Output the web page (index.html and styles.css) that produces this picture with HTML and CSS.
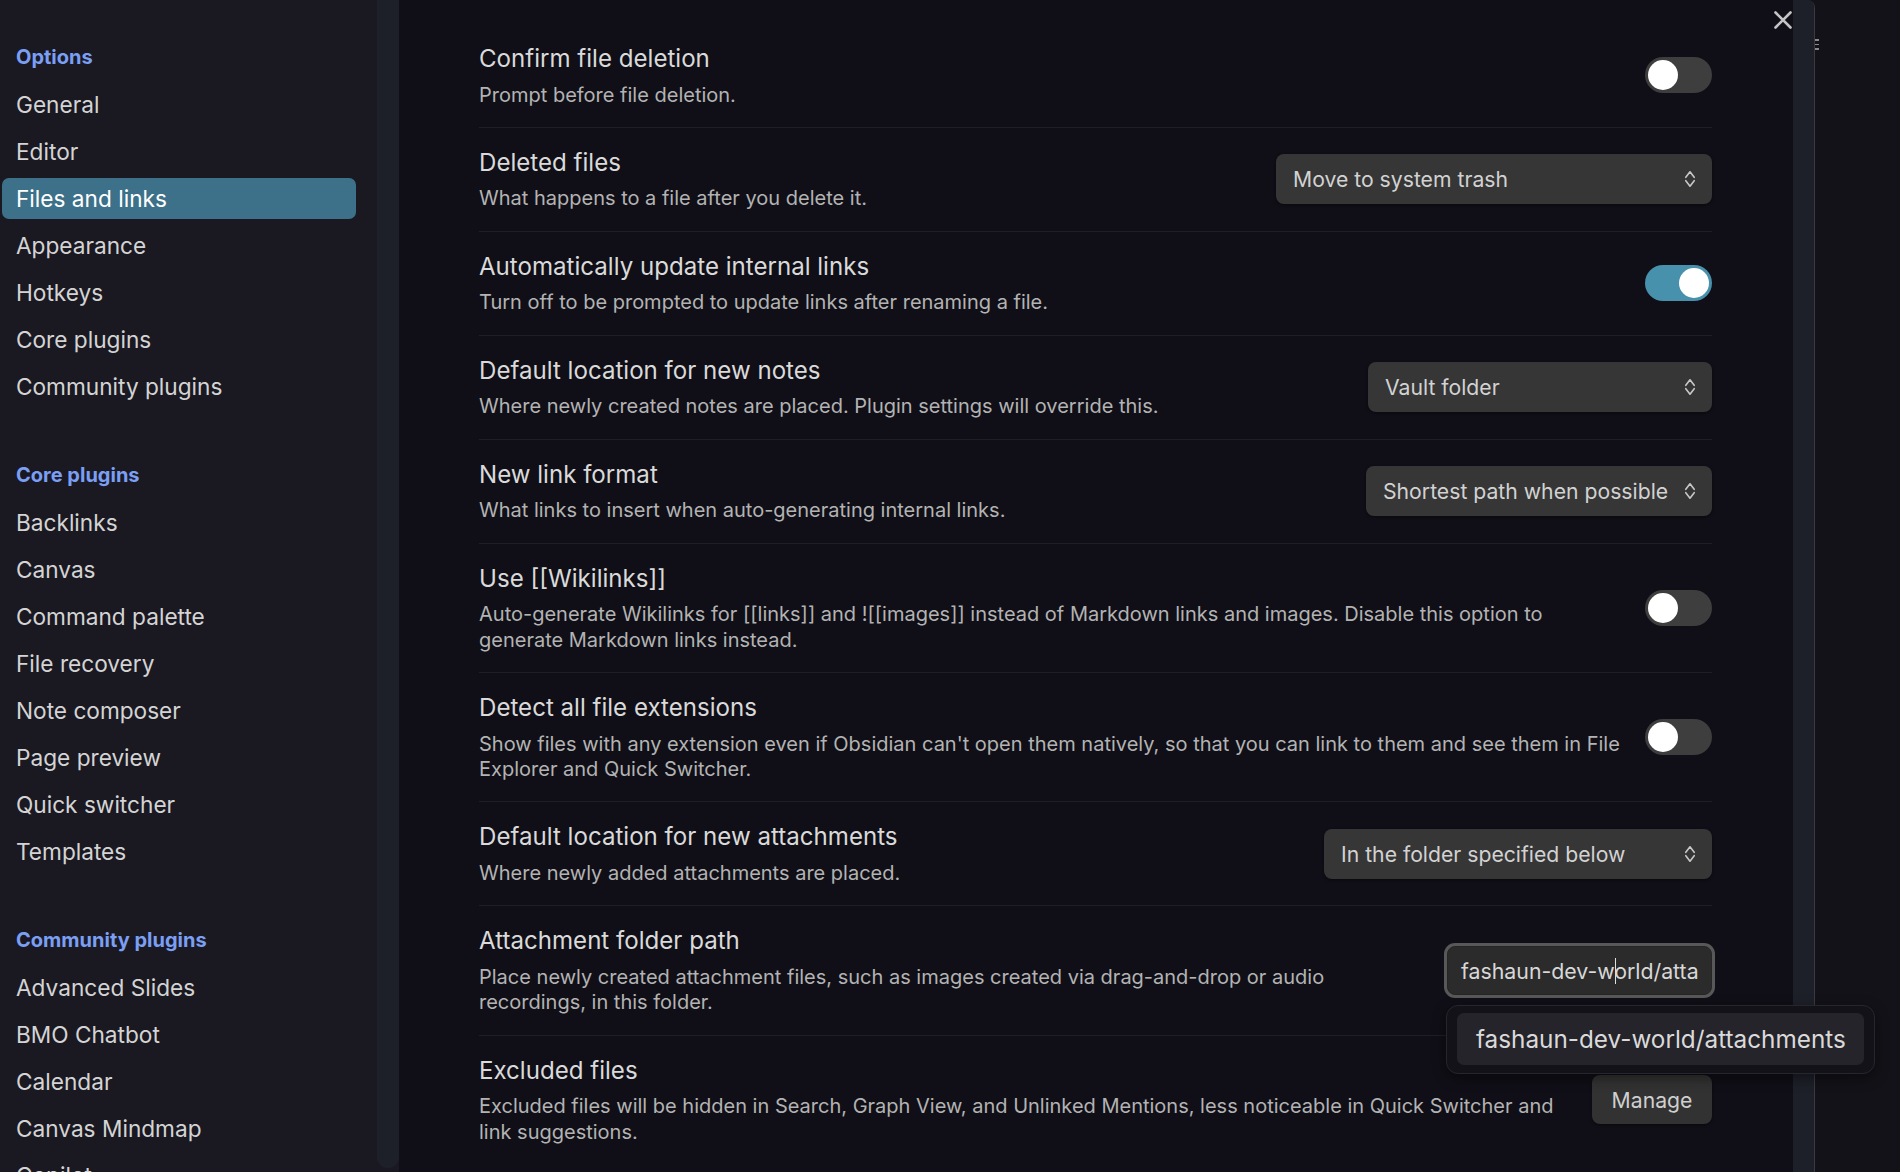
FILE: index.html
```html
<!DOCTYPE html>
<html lang="en">
<head>
<meta charset="utf-8">
<title>Settings – Files and links</title>
<link rel="stylesheet" href="styles.css">
</head>
<body>
<div class="window">
  <div class="modal">
    <aside class="sidebar">
      <nav class="nav">
        <div class="nav-group">
          <div class="nav-heading">Options</div>
          <div class="nav-item">General</div>
          <div class="nav-item">Editor</div>
          <div class="nav-item active">Files and links</div>
          <div class="nav-item">Appearance</div>
          <div class="nav-item">Hotkeys</div>
          <div class="nav-item">Core plugins</div>
          <div class="nav-item">Community plugins</div>
        </div>
        <div class="nav-group">
          <div class="nav-heading">Core plugins</div>
          <div class="nav-item">Backlinks</div>
          <div class="nav-item">Canvas</div>
          <div class="nav-item">Command palette</div>
          <div class="nav-item">File recovery</div>
          <div class="nav-item">Note composer</div>
          <div class="nav-item">Page preview</div>
          <div class="nav-item">Quick switcher</div>
          <div class="nav-item">Templates</div>
        </div>
        <div class="nav-group">
          <div class="nav-heading">Community plugins</div>
          <div class="nav-item">Advanced Slides</div>
          <div class="nav-item">BMO Chatbot</div>
          <div class="nav-item">Calendar</div>
          <div class="nav-item">Canvas Mindmap</div>
          <div class="nav-item">Copilot</div>
        </div>
      </nav>
      <div class="sidebar-scroll"></div>
    </aside>

    <main class="content">
      <div class="setting">
        <div class="info">
          <div class="name">Confirm file deletion</div>
          <div class="desc">Prompt before file deletion.</div>
        </div>
        <div class="control"><div class="toggle"><div class="knob"></div></div></div>
      </div>

      <div class="setting">
        <div class="info">
          <div class="name">Deleted files</div>
          <div class="desc">What happens to a file after you delete it.</div>
        </div>
        <div class="control">
          <div class="dropdown w-trash"><span>Move to system trash</span>
            <svg class="chev" viewBox="0 0 12 20" width="12" height="20"><path d="M1.8 8.3 L6 2.8 L10.2 8.3 M1.8 11.7 L6 17.2 L10.2 11.7"/></svg>
          </div>
        </div>
      </div>

      <div class="setting">
        <div class="info">
          <div class="name">Automatically update internal links</div>
          <div class="desc">Turn off to be prompted to update links after renaming a file.</div>
        </div>
        <div class="control"><div class="toggle on"><div class="knob"></div></div></div>
      </div>

      <div class="setting">
        <div class="info">
          <div class="name">Default location for new notes</div>
          <div class="desc">Where newly created notes are placed. Plugin settings will override this.</div>
        </div>
        <div class="control">
          <div class="dropdown w-vault"><span>Vault folder</span>
            <svg class="chev" viewBox="0 0 12 20" width="12" height="20"><path d="M1.8 8.3 L6 2.8 L10.2 8.3 M1.8 11.7 L6 17.2 L10.2 11.7"/></svg>
          </div>
        </div>
      </div>

      <div class="setting">
        <div class="info">
          <div class="name">New link format</div>
          <div class="desc">What links to insert when auto-generating internal links.</div>
        </div>
        <div class="control">
          <div class="dropdown w-short"><span>Shortest path when possible</span>
            <svg class="chev" viewBox="0 0 12 20" width="12" height="20"><path d="M1.8 8.3 L6 2.8 L10.2 8.3 M1.8 11.7 L6 17.2 L10.2 11.7"/></svg>
          </div>
        </div>
      </div>

      <div class="setting">
        <div class="info">
          <div class="name">Use [[Wikilinks]]</div>
          <div class="desc">Auto-generate Wikilinks for [[links]] and ![[images]] instead of Markdown links and images. Disable this option to generate Markdown links instead.</div>
        </div>
        <div class="control"><div class="toggle"><div class="knob"></div></div></div>
      </div>

      <div class="setting">
        <div class="info">
          <div class="name">Detect all file extensions</div>
          <div class="desc">Show files with any extension even if Obsidian can't open them natively, so that you can link to them and see them in File Explorer and Quick Switcher.</div>
        </div>
        <div class="control"><div class="toggle"><div class="knob"></div></div></div>
      </div>

      <div class="setting">
        <div class="info">
          <div class="name">Default location for new attachments</div>
          <div class="desc">Where newly added attachments are placed.</div>
        </div>
        <div class="control">
          <div class="dropdown w-attach"><span>In the folder specified below</span>
            <svg class="chev" viewBox="0 0 12 20" width="12" height="20"><path d="M1.8 8.3 L6 2.8 L10.2 8.3 M1.8 11.7 L6 17.2 L10.2 11.7"/></svg>
          </div>
        </div>
      </div>

      <div class="setting">
        <div class="info">
          <div class="name">Attachment folder path</div>
          <div class="desc">Place newly created attachment files, such as images created via drag-and-drop or audio recordings, in this folder.</div>
        </div>
        <div class="control">
          <div class="path-input">fashaun-dev-w<span class="caret"></span>orld/atta</div>
        </div>
      </div>

      <div class="setting">
        <div class="info">
          <div class="name">Excluded files</div>
          <div class="desc">Excluded files will be hidden in Search, Graph View, and Unlinked Mentions, less noticeable in Quick Switcher and link suggestions.</div>
        </div>
        <div class="control"><div class="btn">Manage</div></div>
      </div>
    </main>

    <div class="content-scroll"></div>

    <div class="close">
      <svg viewBox="0 0 18 18" width="18" height="18"><path d="M1.5 1.5 L16.5 16.5 M16.5 1.5 L1.5 16.5"/></svg>
    </div>
  </div>

  <div class="behind">
    <div class="more-icon"><i></i><i></i><i></i></div>
  </div>

  <div class="suggest">
    <div class="suggest-item">fashaun-dev-world/attachments</div>
  </div>
</div>
</body>
</html>
```

FILE: styles.css
```css
html, body {
  margin: 0;
  padding: 0;
}

body {
  background: #131218;
  font-family: Inter, "Noto Sans", "Liberation Sans", sans-serif;
  overflow: hidden;
}

.window {
  position: relative;
  display: flex;
  width: 1900px;
  height: 1172px;
  overflow: hidden;
}

/* ---------- modal ---------- */
.modal {
  position: relative;
  display: flex;
  flex: none;
  width: 1815px;
  height: 1172px;
  box-sizing: border-box;
  border-right: 1px solid #3a3a42;
  border-top-right-radius: 8px;
  overflow: hidden;
}

/* ---------- sidebar ---------- */
.sidebar {
  flex: none;
  display: flex;
  width: 399px;
  background: #1a1922;
  overflow: hidden;
}

.nav {
  width: 377px;
  padding-top: 44.5px;
  box-sizing: border-box;
}

.nav-group + .nav-group {
  margin-top: 55.5px;
}

.nav-heading {
  height: 24px;
  line-height: 24px;
  padding-left: 16px;
  margin-bottom: 15.5px;
  font-size: 20px;
  font-weight: 700;
  color: #7b9ff3;
}

.nav-item {
  height: 41px;
  line-height: 41px;
  margin: 0 21px 6px 2px;
  padding-left: 14px;
  border-radius: 7px;
  font-size: 22.65px;
  color: #d4d4d4;
  white-space: nowrap;
}

.nav-item.active {
  background: #3c7189;
  color: #ffffff;
}

.sidebar-scroll {
  flex: none;
  width: 22px;
  height: 1168px;
  background: #1e2029;
  border-radius: 0 0 11px 11px;
}

/* ---------- content ---------- */
.content {
  flex: none;
  width: 1394px;
  box-sizing: border-box;
  padding: 23px 81px 0 80px;
  background: #100f17;
  overflow: hidden;
}

.content-scroll {
  flex: none;
  width: 21px;
  background: #1e2029;
}

.setting {
  display: flex;
  align-items: center;
  border-top: 1px solid #1d1f28;
  padding: 19px 0 19.2px;
}

.setting:first-child {
  border-top-color: transparent;
}

.info {
  flex: 1;
  min-width: 0;
  margin-right: 19px;
}

.name {
  font-size: 24.1px;
  line-height: 32px;
  color: #dadada;
}

.desc {
  margin-top: 7.5px;
  font-size: 20px;
  line-height: 25.3px;
  color: #b3b3b3;
}

.control {
  flex: none;
  display: flex;
  justify-content: flex-end;
  align-items: center;
}

/* toggle */
.toggle {
  display: flex;
  width: 67px;
  height: 36px;
  padding: 3px;
  box-sizing: border-box;
  border-radius: 18px;
  background: #3e3e3e;
}

.toggle.on {
  justify-content: flex-end;
  background: #4891ad;
}

.knob {
  width: 30px;
  height: 30px;
  border-radius: 50%;
  background: #ffffff;
}

/* dropdown */
.dropdown {
  display: flex;
  align-items: center;
  justify-content: space-between;
  height: 50px;
  box-sizing: border-box;
  padding: 0 16px 0 17px;
  border-radius: 8px;
  background: #363636;
  box-shadow: 0 1px 3px rgba(0, 0, 0, 0.5);
  font-size: 21.2px;
  color: #d2d2d2;
  white-space: nowrap;
}

.w-trash { width: 436px; }
.w-vault { width: 344px; }
.w-short { width: 346px; }
.w-attach { width: 388px; }

.chev {
  flex: none;
}

.chev path {
  fill: none;
  stroke: #c8c8c8;
  stroke-width: 1.6;
  stroke-linecap: round;
  stroke-linejoin: round;
}

/* text input */
.path-input {
  display: flex;
  align-items: center;
  width: 265px;
  height: 49px;
  box-sizing: border-box;
  padding: 0 8px 0 13px;
  border: 1px solid #262626;
  border-radius: 8px;
  background: #2b2b2b;
  box-shadow: 0 0 0 3px #585858;
  font-size: 21.3px;
  color: #d8d8d8;
  white-space: nowrap;
  overflow: hidden;
}

.caret {
  display: inline-block;
  width: 0;
  height: 26px;
  border-left: 1.5px solid #e0e0e0;
  margin-right: -1.5px;
}

/* button */
.btn {
  display: flex;
  align-items: center;
  justify-content: center;
  width: 120px;
  height: 49px;
  border-radius: 8px;
  background: #323232;
  box-shadow: 0 1px 3px rgba(0, 0, 0, 0.45);
  font-size: 21.2px;
  color: #cfcfcf;
}

/* close */
.close {
  position: absolute;
  left: 1774px;
  top: 11px;
  width: 18px;
  height: 18px;
}

.close svg {
  display: block;
}

.close path {
  fill: none;
  stroke: #c4c4c4;
  stroke-width: 2.6;
  stroke-linecap: round;
}

/* area behind the modal */
.behind {
  flex: 1;
  background: #131218;
  padding-top: 39px;
}

.more-icon {
  display: flex;
  flex-direction: column;
  gap: 3px;
}

.more-icon i {
  display: block;
  width: 4px;
  height: 1.5px;
  background: #8a8a8a;
}

/* suggestion popup */
.suggest {
  position: absolute;
  left: 1446px;
  top: 1005px;
  width: 429px;
  box-sizing: border-box;
  padding: 7px 10px 8px;
  border: 1px solid #26262f;
  border-radius: 12px;
  background: #131219;
  box-shadow: 0 4px 14px rgba(0, 0, 0, 0.45);
}

.suggest-item {
  height: 52px;
  line-height: 52px;
  padding-left: 19px;
  border-radius: 7px;
  background: #25242b;
  font-size: 24.3px;
  color: #dadada;
  white-space: nowrap;
}
```
